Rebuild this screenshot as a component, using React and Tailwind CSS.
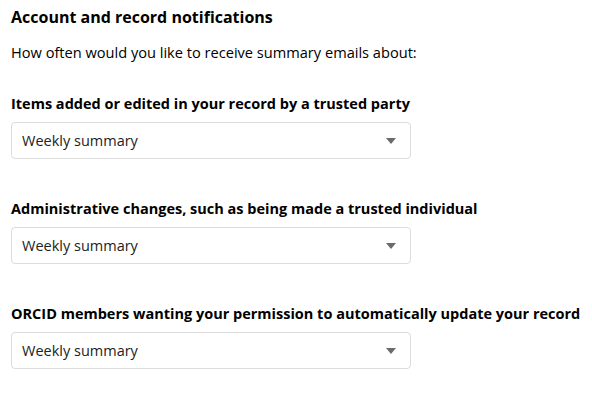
// Account & record notification frequency settings
const GROUPS = [
  "Items added or edited in your record by a trusted party",
  "Administrative changes, such as being made a trusted individual",
  "ORCID members wanting your permission to automatically update your record",
];

function Caret() {
  return (
    <svg width="10" height="6" viewBox="0 0 10 6" className="shrink-0">
      <path d="M0 0h10L5 6z" fill="#6b6b6b" />
    </svg>
  );
}

function FrequencySelect() {
  return (
    <div className="w-[400px] h-[37px] rounded-[4px] border border-[#dcdcdc] bg-white flex items-center justify-between pl-[10px] pr-[14px]">
      <span className="text-[14.5px] text-[#222]">Weekly summary</span>
      <Caret />
    </div>
  );
}

export default function App() {
  return (
    <div className="w-[592px] h-[403px] bg-white pl-[11px] pt-[7px] text-black" style={{ fontFamily: '"Open Sans", sans-serif' }}>
      <h2 className="text-[16px] font-bold leading-[20px]">Account and record notifications</h2>
      <p className="mt-[15px] text-[14.6px] leading-[20px]">How often would you like to receive summary emails about:</p>
      {GROUPS.map((label, i) => (
        <div key={i} className={i === 0 ? "mt-[32px]" : "mt-[40px]"}>
          <div className="text-[14.5px] font-bold leading-[20px] mb-[8px]">{label}</div>
          <FrequencySelect />
        </div>
      ))}
    </div>
  );
}
